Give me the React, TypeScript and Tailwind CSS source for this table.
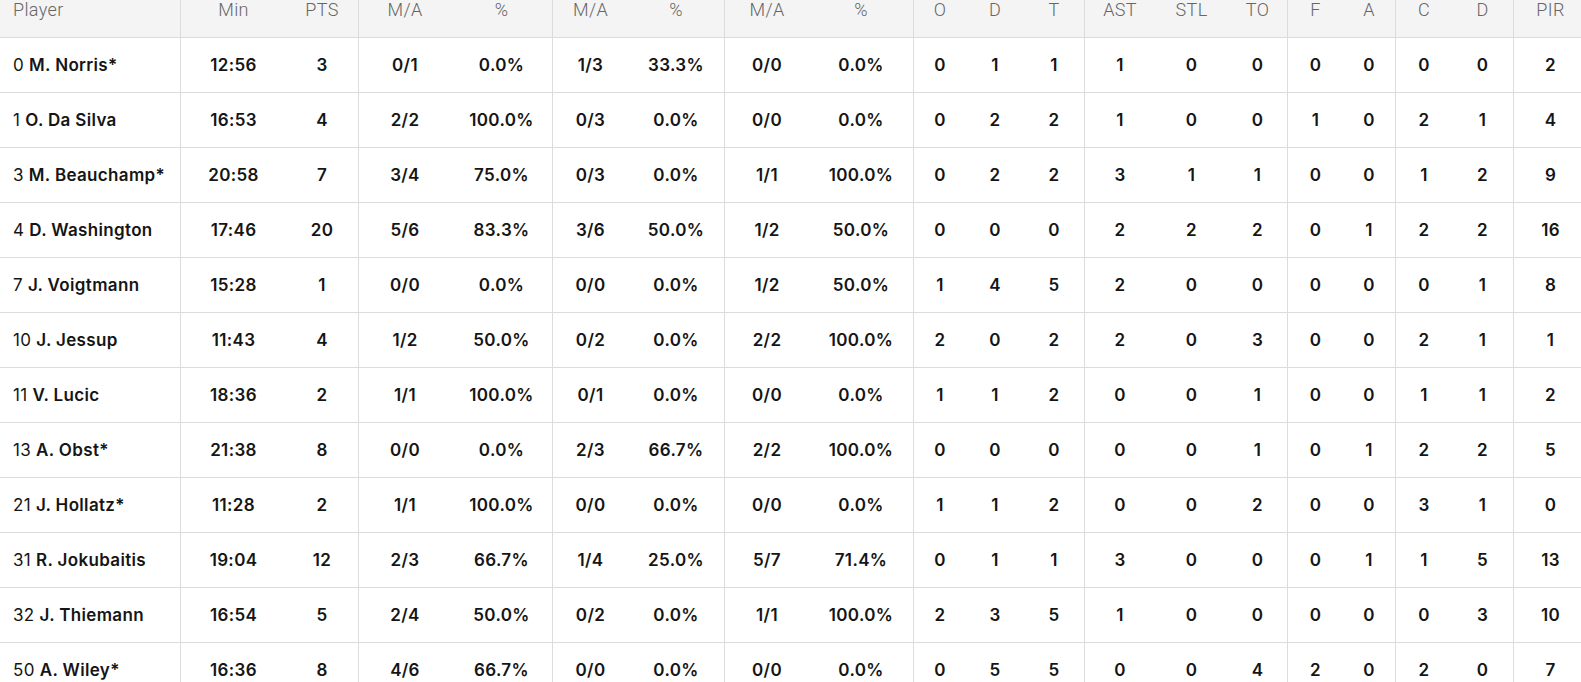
const headers = ['Player', 'Min', 'PTS', 'M/A', '%', 'M/A', '%', 'M/A', '%', 'O', 'D', 'T', 'AST', 'STL', 'TO', 'F', 'A', 'C', 'D', 'PIR'];

// columns that open a new group get a left rule
const groupStarts = new Set([1, 3, 5, 7, 9, 12, 15, 17, 19]);

const rows: string[][] = [
  ['0', 'M. Norris*', '12:56', '3', '0/1', '0.0%', '1/3', '33.3%', '0/0', '0.0%', '0', '1', '1', '1', '0', '0', '0', '0', '0', '0', '2'],
  ['1', 'O. Da Silva', '16:53', '4', '2/2', '100.0%', '0/3', '0.0%', '0/0', '0.0%', '0', '2', '2', '1', '0', '0', '1', '0', '2', '1', '4'],
  ['3', 'M. Beauchamp*', '20:58', '7', '3/4', '75.0%', '0/3', '0.0%', '1/1', '100.0%', '0', '2', '2', '3', '1', '1', '0', '0', '1', '2', '9'],
  ['4', 'D. Washington', '17:46', '20', '5/6', '83.3%', '3/6', '50.0%', '1/2', '50.0%', '0', '0', '0', '2', '2', '2', '0', '1', '2', '2', '16'],
  ['7', 'J. Voigtmann', '15:28', '1', '0/0', '0.0%', '0/0', '0.0%', '1/2', '50.0%', '1', '4', '5', '2', '0', '0', '0', '0', '0', '1', '8'],
  ['10', 'J. Jessup', '11:43', '4', '1/2', '50.0%', '0/2', '0.0%', '2/2', '100.0%', '2', '0', '2', '2', '0', '3', '0', '0', '2', '1', '1'],
  ['11', 'V. Lucic', '18:36', '2', '1/1', '100.0%', '0/1', '0.0%', '0/0', '0.0%', '1', '1', '2', '0', '0', '1', '0', '0', '1', '1', '2'],
  ['13', 'A. Obst*', '21:38', '8', '0/0', '0.0%', '2/3', '66.7%', '2/2', '100.0%', '0', '0', '0', '0', '0', '1', '0', '1', '2', '2', '5'],
  ['21', 'J. Hollatz*', '11:28', '2', '1/1', '100.0%', '0/0', '0.0%', '0/0', '0.0%', '1', '1', '2', '0', '0', '2', '0', '0', '3', '1', '0'],
  ['31', 'R. Jokubaitis', '19:04', '12', '2/3', '66.7%', '1/4', '25.0%', '5/7', '71.4%', '0', '1', '1', '3', '0', '0', '0', '1', '1', '5', '13'],
  ['32', 'J. Thiemann', '16:54', '5', '2/4', '50.0%', '0/2', '0.0%', '1/1', '100.0%', '2', '3', '5', '1', '0', '0', '0', '0', '0', '3', '10'],
  ['50', 'A. Wiley*', '16:36', '8', '4/6', '66.7%', '0/0', '0.0%', '0/0', '0.0%', '0', '5', '5', '0', '0', '4', '2', '0', '2', '0', '7'],
];

const gridCols =
  'grid grid-cols-[180px_106px_72px_93px_101px_76px_96px_85px_104px_53px_58px_60px_71px_73px_59px_56px_52px_57px_61px_74px]';

export default function App() {
  return (
    <div className="w-full h-[682px] overflow-hidden bg-white">
      <div className="w-[1587px]">
        <div className={`${gridCols} h-[38px] bg-[#f4f4f4] border-b border-[#dcdcdc]`}>
          {headers.map((h, i) => (
            <div
              key={i}
              className={`flex items-start leading-[20px] text-[18px] tracking-[0.02em] font-light text-[#666] font-['Roboto',sans-serif] ${
                i === 0 ? 'pl-[13px]' : 'justify-center'
              } ${groupStarts.has(i) ? 'border-l border-[#dcdcdc]' : ''}`}
            >
              {h}
            </div>
          ))}
        </div>

        {rows.map((r, ri) => (
          <div
            key={ri}
            className={`${gridCols} h-[55px] border-b border-[#dcdcdc] font-['Inter',sans-serif] text-[17px] tracking-[0.02em] text-[#151515]`}
          >
            <div className="flex items-center pl-[13px] pt-[2px]">
              <span className="font-normal">{r[0]}</span>
              <span className="ml-[5px] font-semibold">{r[1]}</span>
            </div>
            {r.slice(2).map((v, ci) => (
              <div
                key={ci}
                className={`flex items-center justify-center pt-[2px] font-semibold ${
                  groupStarts.has(ci + 1) ? 'border-l border-[#dcdcdc]' : ''
                }`}
              >
                {v}
              </div>
            ))}
          </div>
        ))}
      </div>
    </div>
  );
}
